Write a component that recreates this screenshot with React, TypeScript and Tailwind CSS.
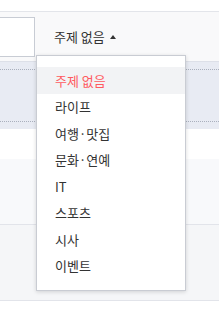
import React from "react";

const items = ["주제 없음", "라이프", "여행·맛집", "문화·연예", "IT", "스포츠", "시사", "이벤트"];

export default function App() {
  return (
    <div
      className="relative w-[219px] h-[315px] overflow-hidden bg-white text-[#333]"
      style={{ fontFamily: '"Noto Sans CJK KR", "Noto Sans", sans-serif' }}
    >
      <div className="h-[11px] bg-white border-b border-[#e3e5ea] box-content" />
      <div className="h-[49px] bg-[#f9f9fa] border-b border-[#dde0e8] box-content flex items-start">
        <div className="mt-[5px] w-[36px] h-[40px] -ml-px bg-white border border-[#c8ccd4]" />
        <div className="ml-[19px] mt-[17px] flex items-center text-[13px] leading-[15px] text-[#333]">
          <span>주제 없음</span>
          <span className="ml-[5px] w-0 h-0 border-l-[3px] border-r-[3px] border-b-[4px] border-l-transparent border-r-transparent border-b-[#333]" />
        </div>
      </div>
      <div className="h-[67px] bg-[#e8ebf3] pt-[7px]">
        <div className="h-[53px] border-t border-b border-dotted border-[#aab0bd]" />
      </div>
      <div className="h-[30px] bg-white" />
      <div className="h-[65px] bg-[#f8f9fb] border-b border-[#e2e4ea] box-content" />
      <div className="h-[75px] bg-[#f5f6f8] border-b border-[#e2e4ea] box-content" />
      <div className="h-[20px] bg-white" />

      <div className="absolute left-[36px] top-[55px] w-[150px] h-[236px] bg-white border border-[#c9ccd3] shadow-[0_1px_4px_rgba(0,0,0,0.15)] pt-[11px]">
        {items.map((it, i) => (
          <div
            key={it}
            className={
              "h-[26.5px] flex items-center pl-[18px] text-[13px] " +
              (i === 0 ? "bg-[#f2f3f5] text-[#ff5a5f]" : "text-[#333]")
            }
          >
            {it}
          </div>
        ))}
      </div>
    </div>
  );
}
